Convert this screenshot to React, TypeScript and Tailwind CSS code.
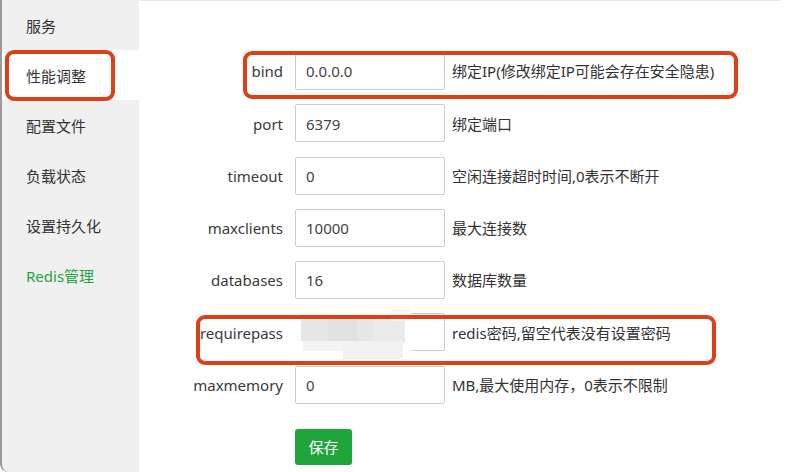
import React from "react";

const font = { fontFamily: '"Noto Sans", "Noto Sans CJK SC", sans-serif' };

const menu = ["服务", "性能调整", "配置文件", "负载状态", "设置持久化", "Redis管理"];

const rows: { label: string; value: string; desc: string }[] = [
  { label: "bind", value: "0.0.0.0", desc: "绑定IP(修改绑定IP可能会存在安全隐患)" },
  { label: "port", value: "6379", desc: "绑定端口" },
  { label: "timeout", value: "0", desc: "空闲连接超时时间,0表示不断开" },
  { label: "maxclients", value: "10000", desc: "最大连接数" },
  { label: "databases", value: "16", desc: "数据库数量" },
  { label: "requirepass", value: "", desc: "redis密码,留空代表没有设置密码" },
  { label: "maxmemory", value: "0", desc: "MB,最大使用内存，0表示不限制" },
];

function Blur() {
  return (
    <svg className="absolute left-[283px] top-[309px]" width="128" height="50" viewBox="0 0 128 50">
      <rect x="0" y="0" width="128" height="50" fill="#ffffff" fillOpacity="0.95" />
      <rect x="18" y="10" width="104" height="22" fill="#e7e7e7" />
      <rect x="45" y="10" width="30" height="22" fill="#e1e1e1" />
      <rect x="90" y="8" width="32" height="26" fill="#ebebeb" />
      <rect x="20" y="32" width="50" height="10" fill="#f4f4f4" />
      <rect x="60" y="32" width="60" height="18" fill="#f2f2f2" />
      <rect x="108" y="0" width="20" height="12" fill="#f6f6f6" />
    </svg>
  );
}

export default function App() {
  return (
    <div className="relative w-[790px] h-[472px] bg-white overflow-hidden text-[15px] text-[#333]" style={font}>
      <div className="flex h-full">
        <div className="w-[139px] h-full bg-[#f0f0f0] border-l-2 border-[#9a9a9a] rounded-bl-[8px] flex flex-col">
          {menu.map((m, i) => (
            <div
              key={m}
              className={
                "h-[50px] flex items-center pl-[24px] pt-[3px] " +
                (i === 1 ? "bg-white text-[#333]" : i === 5 ? "text-[#20a53a]" : "text-[#333]")
              }
            >
              {m}
            </div>
          ))}
        </div>
        <div className="w-[642px] h-full border-t border-[#e8e8e8] pt-[51px] pl-[44px] flex flex-col gap-[14.3px]">
          {rows.map((r) => (
            <div key={r.label} className="flex items-center h-[38px]">
              <div className="w-[100px] text-right text-[#3a3a3a] whitespace-nowrap pt-[1px]">{r.label}</div>
              <div className="ml-[12px] w-[150px] h-[38px] border border-[#cccccc] rounded-[2px] flex items-center pl-[10px] text-[#444] pt-[1px]">
                {r.value}
              </div>
              <div className="ml-[7px] whitespace-nowrap text-[#333] pt-[1px]">{r.desc}</div>
            </div>
          ))}
          <div className="flex pl-[112px] mt-[11px]">
            <div className="w-[57px] h-[36px] bg-[#20a53a] rounded-[3px] text-white flex items-center justify-center pt-[1px]">
              保存
            </div>
          </div>
        </div>
      </div>

      <Blur />

      {/* annotation boxes */}
      <div className="absolute left-[5px] top-[50px] w-[110px] h-[51px] border-4 border-[#dd3f18] rounded-[9px]" />
      <div className="absolute left-[243px] top-[51px] w-[495px] h-[48px] border-4 border-[#dd3f18] rounded-[9px]" />
      <div className="absolute left-[196px] top-[315px] w-[520px] h-[50px] border-4 border-[#dd3f18] rounded-[9px]" />
    </div>
  );
}
